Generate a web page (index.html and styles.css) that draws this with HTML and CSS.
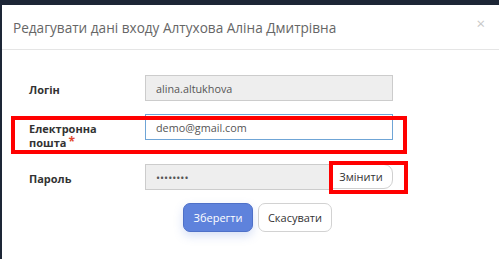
FILE: index.html
```html
<!DOCTYPE html>
<html lang="uk">
<head>
    <meta charset="UTF-8">
    <meta name="viewport" content="width=device-width, initial-scale=1.0">
    <title>Редагувати дані входу</title>
    <link rel="stylesheet" href="styles.css">
</head>
<body>
    <div class="backdrop">
        <div class="modal">
            <div class="modal-header">
                <h4 class="modal-title">Редагувати дані входу Алтухова Аліна Дмитрівна</h4>
                <span class="close">&times;</span>
            </div>
            <div class="modal-body">
                <div class="form-row">
                    <label class="control-label">Логін</label>
                    <div class="field">
                        <input class="form-control" type="text" value="alina.altukhova" readonly>
                    </div>
                </div>
                <div class="form-row">
                    <label class="control-label">Електронна пошта<span class="required">*</span></label>
                    <div class="field">
                        <input class="form-control focused" type="text" value="demo@gmail.com">
                    </div>
                </div>
                <div class="form-row">
                    <label class="control-label">Пароль</label>
                    <div class="field input-group">
                        <input class="form-control" type="password" value="12345678" readonly>
                        <button class="btn btn-addon">Змінити</button>
                    </div>
                </div>
                <div class="actions">
                    <button class="btn btn-primary">Зберегти</button>
                    <button class="btn btn-default">Скасувати</button>
                </div>
            </div>

            <!-- annotation boxes drawn over the form -->
            <div class="mark mark-email"></div>
            <div class="mark mark-change"></div>
        </div>
    </div>
</body>
</html>
```

FILE: styles.css
```css
body {
    margin: 0;
    font-family: 'Open Sans', sans-serif;
    background: #1d2636;
    overflow: hidden;
}

.backdrop {
    padding: 5px 0 0 2px;
    height: 254px;
}

.modal {
    position: relative;
    background: #fff;
    height: 100%;
    width: 520px;
}

.modal-header {
    display: flex;
    align-items: center;
    height: 45px;
    padding: 0 14px 0 11px;
    border-bottom: 1px solid #e5e5e5;
    box-sizing: border-box;
    width: 497px;
}

.modal-title {
    margin: 0;
    flex: 1;
    font-size: 13.6px;
    font-weight: 400;
    color: #666;
}

.close {
    font-size: 15px;
    color: #c8c8c8;
    line-height: 1;
    margin-top: -8px;
}

.modal-body {
    padding: 25px 0 0 27px;
}

.form-row {
    display: flex;
    margin-bottom: 13px;
}

.form-row:nth-child(2) {
    margin-bottom: 14px;
}

.control-label {
    width: 116px;
    padding-top: 8px;
    font-size: 11px;
    line-height: 14px;
    font-weight: 700;
    color: #333;
    box-sizing: border-box;
    padding-right: 40px;
}

.required {
    color: #e2462c;
    font-size: 12px;
    line-height: 1;
    margin-left: 2px;
    vertical-align: top;
}

.field {
    width: 248px;
    display: flex;
}

.form-control {
    width: 100%;
    height: 26px;
    box-sizing: border-box;
    border: 1px solid #ccc;
    background: #eee;
    padding: 0 10px;
    font-family: 'Open Sans', sans-serif;
    font-size: 10.8px;
    color: #555;
    outline: none;
}

.form-control.focused {
    background: #fff;
    border-color: #6fa5d6;
}

.input-group .form-control {
    flex: 1;
    min-width: 0;
}

.btn {
    font-family: 'Open Sans', sans-serif;
    font-size: 11px;
    cursor: pointer;
}

.btn-addon {
    width: 64px;
    height: 25px;
    margin-left: -1px;
    background: #fff;
    border: 1px solid #d0d0d0;
    border-radius: 0 9px 9px 0;
    color: #333;
    padding: 0;
}

.actions {
    display: flex;
    gap: 5px;
    padding-left: 154px;
}

.btn-primary,
.btn-default {
    height: 29px;
    border-radius: 7px;
    padding: 0;
}

.btn-primary {
    width: 70px;
    background: #5e82dc;
    border: 1px solid #4e70c8;
    color: #fff;
    box-shadow: 0 4px 10px rgba(94, 130, 220, 0.25);
}

.btn-default {
    width: 74px;
    background: #fff;
    border: 1px solid #d2d2d2;
    color: #333;
}

.mark {
    position: absolute;
    border: 4px solid #f00;
    box-sizing: border-box;
}

.mark-email {
    left: 9px;
    top: 111px;
    width: 396px;
    height: 38px;
}

.mark-change {
    left: 327px;
    top: 156px;
    width: 79px;
    height: 33px;
}
```
